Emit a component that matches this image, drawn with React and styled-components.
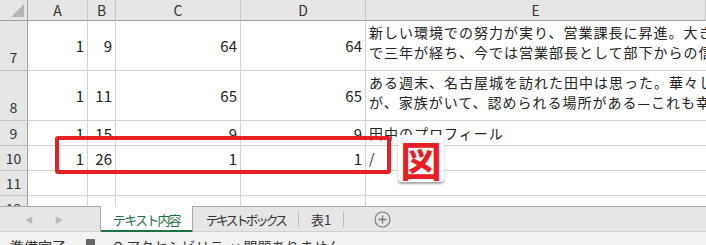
import React from 'react'
import styled, { createGlobalStyle } from 'styled-components'

const GlobalStyle = createGlobalStyle`
  html, body { margin: 0; padding: 0; background: #fff; }
  body { font-family: "Noto Sans CJK JP", "Liberation Sans", sans-serif; }
`

const rows = [
  { no: 7, h: 50, a: 1, b: 9, c: 64, d: 64, e: ['新しい環境での努力が実り、営業課長に昇進。大き', 'で三年が経ち、今では営業部長として部下からの信頼'] },
  { no: 8, h: 50, a: 1, b: 11, c: 65, d: 65, e: ['ある週末、名古屋城を訪れた田中は思った。華々し', 'が、家族がいて、認められる場所がある—これも幸'] },
  { no: 9, h: 25, a: 1, b: 15, c: 9, d: 9, e: ['田中のプロフィール'] },
  { no: 10, h: 25, a: 1, b: 26, c: 1, d: 1, e: ['/'] },
  { no: 11, h: 25, e: [] },
  { no: 12, h: 25, e: [] },
]

const Page = styled.div`
  width: 706px;
  height: 245px;
  overflow: hidden;
  display: flex;
  flex-direction: column;
`

const Sheet = styled.div`
  position: relative;
  height: 206px;
  flex: none;
  overflow: hidden;
  display: grid;
  grid-template-columns: 28px 60px 28px 125px 125px 340px;
  grid-template-rows: 21px ${rows.map((r) => r.h + 'px').join(' ')};
`

const ColHead = styled.div`
  background: #e6e6e6;
  border-right: 1px solid #c8c8c8;
  border-bottom: 1px solid #9f9f9f;
  color: #333;
  font-size: 14px;
  line-height: 20px;
  text-align: center;
  box-sizing: border-box;
`

const Corner = styled(ColHead)`
  position: relative;
  border-right: 1px solid #9f9f9f;
  &::after {
    content: '';
    position: absolute;
    right: 3px;
    bottom: 3px;
    width: 0;
    height: 0;
    border-left: 13px solid transparent;
    border-bottom: 13px solid #b5b5b5;
  }
`

const RowHead = styled.div`
  background: #e6e6e6;
  border-right: 1px solid #9f9f9f;
  border-bottom: 1px solid #c8c8c8;
  color: #333;
  font-size: 14px;
  display: flex;
  align-items: ${(p) => (p.$tall ? 'flex-end' : 'center')};
  justify-content: center;
  padding-bottom: ${(p) => (p.$tall ? '3px' : '0')};
  box-sizing: border-box;
`

const Cell = styled.div`
  border-right: 1px solid #d4d4d4;
  border-bottom: 1px solid #d4d4d4;
  box-sizing: border-box;
  font-size: 15px;
  color: #222;
  display: flex;
  align-items: center;
  justify-content: flex-end;
  padding-right: 3px;
`

const TextCell = styled.div`
  border-bottom: 1px solid #d4d4d4;
  box-sizing: border-box;
  overflow: hidden;
  padding: ${(p) => (p.$tall ? '1px 0 0 3px' : '0 0 0 3px')};
  display: flex;
  flex-direction: column;
  justify-content: ${(p) => (p.$tall ? 'flex-start' : 'center')};
`

const Line = styled.div`
  font-size: 14px;
  letter-spacing: 1px;
  line-height: 20px;
  color: #222;
  white-space: nowrap;
`

const Frame = styled.div`
  position: absolute;
  left: 55px;
  top: 136px;
  width: 336px;
  height: 38px;
  box-sizing: border-box;
  border: 4.5px solid #e81d25;
  border-radius: 3px;
`

const Stamp = styled.div`
  position: absolute;
  left: 398px;
  top: 135px;
  width: 46px;
  height: 47px;
  background: #fff;
  border-radius: 4px;
  box-shadow: 0 2px 2px rgba(0, 0, 0, 0.35);
  color: #e81d25;
  font-size: 42px;
  font-weight: 700;
  line-height: 47px;
  text-align: center;
`

const TabBar = styled.div`
  height: 26px;
  flex: none;
  background: #e6e6e6;
  border-top: 1px solid #a9a9a9;
  border-bottom: 1px solid #d0d0d0;
  display: flex;
  align-items: stretch;
  box-sizing: border-box;
`

const Nav = styled.div`
  width: 100px;
  display: flex;
  align-items: center;
  gap: 22px;
  padding-left: 25px;
  box-sizing: border-box;
  color: #b8b8b8;
  font-size: 8px;
`

const Tab = styled.div`
  padding: 0 ${(p) => p.$pad}px;
  display: flex;
  align-items: center;
  font-size: 13px;
  letter-spacing: ${(p) => p.$ls}px;
  color: ${(p) => (p.$active ? '#1e7145' : '#333')};
  background: ${(p) => (p.$active ? '#fff' : 'transparent')};
  border-left: ${(p) => (p.$active ? '1px solid #a9a9a9' : 'none')};
  border-right: 1px solid ${(p) => (p.$active ? '#a9a9a9' : '#bdbdbd')};
  box-shadow: ${(p) => (p.$active ? 'inset 0 -2px 0 #1e7145' : 'none')};
  margin: ${(p) => (p.$active ? '-1px 0 -1px' : '4px 0')};
`

const AddButton = styled.div`
  margin-left: 30px;
  display: flex;
  align-items: center;
  color: #777;
`

const Status = styled.div`
  flex: 1;
  background: #f3f3f3;
  display: flex;
  align-items: flex-start;
  gap: 12px;
  padding: 4px 0 0 10px;
  font-size: 14px;
  color: #333;
  white-space: nowrap;
`

const StatusIcon = styled.span`
  display: inline-block;
  width: 9px;
  height: 8px;
  margin: 3px 6px 0 8px;
  background: #666;
  border-radius: 1px;
`

function Plus() {
  return (
    <svg width="17" height="17" viewBox="0 0 17 17">
      <circle cx="8.5" cy="8.5" r="7.5" fill="none" stroke="#7a7a7a" strokeWidth="1.2" />
      <path d="M8.5 4.5v8M4.5 8.5h8" stroke="#7a7a7a" strokeWidth="1.4" />
    </svg>
  )
}

export default function App() {
  return (
    <>
      <GlobalStyle />
      <Page>
        <Sheet>
          <Corner />
          {['A', 'B', 'C', 'D', 'E'].map((c) => (
            <ColHead key={c}>{c}</ColHead>
          ))}
          {rows.map((r) => (
            <React.Fragment key={r.no}>
              <RowHead $tall={r.h > 25}>{r.no}</RowHead>
              <Cell>{r.a}</Cell>
              <Cell>{r.b}</Cell>
              <Cell>{r.c}</Cell>
              <Cell>{r.d}</Cell>
              <TextCell $tall={r.h > 25}>
                {r.e.map((t) => (
                  <Line key={t}>{t}</Line>
                ))}
              </TextCell>
            </React.Fragment>
          ))}
          <Frame />
          <Stamp>図</Stamp>
        </Sheet>
        <TabBar>
          <Nav>
            <span>◀</span>
            <span>▶</span>
          </Nav>
          <Tab $active $pad={12} $ls={-1.8}>テキスト内容</Tab>
          <Tab $pad={13} $ls={-3}>テキストボックス</Tab>
          <Tab $pad={12} $ls={0}>表1</Tab>
          <AddButton>
            <Plus />
          </AddButton>
        </TabBar>
        <Status>
          <span>準備完了</span>
          <StatusIcon />
          <span>⚲ アクセシビリティ: 問題ありません</span>
        </Status>
      </Page>
    </>
  )
}
